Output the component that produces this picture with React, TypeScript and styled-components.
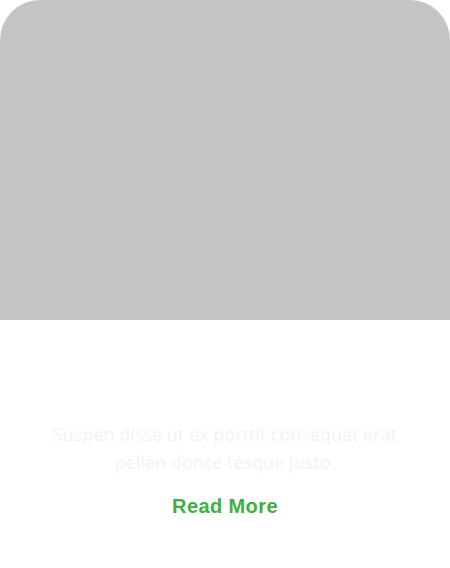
import React from "react";
import styled, { createGlobalStyle } from "styled-components";

const Global = createGlobalStyle`
  html, body { margin: 0; padding: 0; background: #ffffff; }
  * { box-sizing: border-box; }
`;

const Card = styled.div`
  width: 450px;
  display: flex;
  flex-direction: column;
  align-items: center;
  background: #ffffff;
`;

const Media = styled.div`
  width: 100%;
  height: 320px;
  background: #c4c4c4;
  border-radius: 40px 40px 0 0;
`;

const Body = styled.div`
  display: flex;
  flex-direction: column;
  align-items: center;
  padding: 100px 40px 0;
  text-align: center;
`;

const Text = styled.p`
  margin: 0;
  font-family: "Open Sans", sans-serif;
  font-size: 18px;
  line-height: 28px;
  color: #f3f3f3;
  max-width: 360px;
`;

const Link = styled.a`
  margin-top: 16px;
  font-family: "Liberation Sans", Arial, sans-serif;
  font-weight: 700;
  font-size: 20px;
  letter-spacing: 0.4px;
  line-height: 28px;
  color: #3cb043;
  text-decoration: none;
`;

export default function App() {
  return (
    <>
      <Global />
      <Card>
        <Media />
        <Body>
          <Text>Suspen disse ut ex porttit consequat erat pellen donce tesque justo.</Text>
          <Link href="#">Read More</Link>
        </Body>
      </Card>
    </>
  );
}
